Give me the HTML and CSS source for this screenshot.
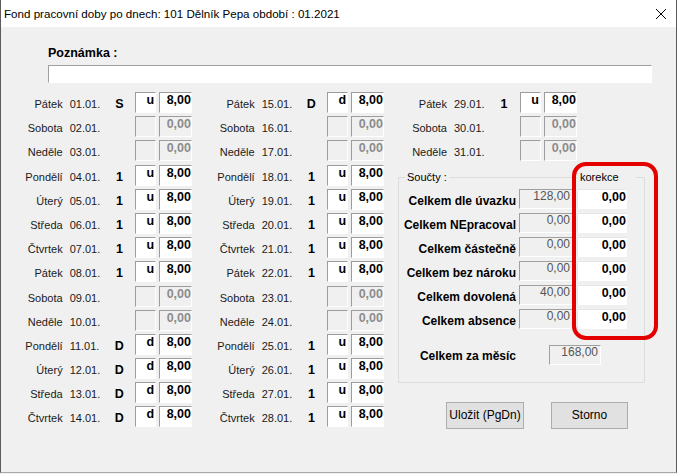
FILE: index.html
```html
<!DOCTYPE html>
<html lang="cs">
<head>
<meta charset="utf-8">
<title>Fond pracovní doby</title>
<link rel="stylesheet" href="styles.css">
</head>
<body>
<div class="window">
  <div class="titlebar">
    <span class="title">Fond pracovní doby po dnech: 101 Dělník Pepa období : 01.2021</span>
    <svg class="close" width="10" height="10" viewBox="0 0 10 10"><path d="M0 0 L10 10 M10 0 L0 10" stroke="#000" stroke-width="1" fill="none"/></svg>
  </div>
  <div class="content">
    <div class="note">
      <div class="note-label">Poznámka :</div>
      <div class="note-input"></div>
    </div>
    <div class="days">
      <div class="col col-first">
        <div class="row"><span class="lbl">Pátek</span><span class="date">01.01.</span><span class="code">S</span><span class="box">u</span><span class="val">8,00</span></div>
        <div class="row"><span class="lbl">Sobota</span><span class="date">02.01.</span><span class="code"></span><span class="box off"></span><span class="val off">0,00</span></div>
        <div class="row"><span class="lbl">Neděle</span><span class="date">03.01.</span><span class="code"></span><span class="box off"></span><span class="val off">0,00</span></div>
        <div class="row"><span class="lbl">Pondělí</span><span class="date">04.01.</span><span class="code">1</span><span class="box">u</span><span class="val">8,00</span></div>
        <div class="row"><span class="lbl">Úterý</span><span class="date">05.01.</span><span class="code">1</span><span class="box">u</span><span class="val">8,00</span></div>
        <div class="row"><span class="lbl">Středa</span><span class="date">06.01.</span><span class="code">1</span><span class="box">u</span><span class="val">8,00</span></div>
        <div class="row"><span class="lbl">Čtvrtek</span><span class="date">07.01.</span><span class="code">1</span><span class="box">u</span><span class="val">8,00</span></div>
        <div class="row"><span class="lbl">Pátek</span><span class="date">08.01.</span><span class="code">1</span><span class="box">u</span><span class="val">8,00</span></div>
        <div class="row"><span class="lbl">Sobota</span><span class="date">09.01.</span><span class="code"></span><span class="box off"></span><span class="val off">0,00</span></div>
        <div class="row"><span class="lbl">Neděle</span><span class="date">10.01.</span><span class="code"></span><span class="box off"></span><span class="val off">0,00</span></div>
        <div class="row"><span class="lbl">Pondělí</span><span class="date">11.01.</span><span class="code">D</span><span class="box">d</span><span class="val">8,00</span></div>
        <div class="row"><span class="lbl">Úterý</span><span class="date">12.01.</span><span class="code">D</span><span class="box">d</span><span class="val">8,00</span></div>
        <div class="row"><span class="lbl">Středa</span><span class="date">13.01.</span><span class="code">D</span><span class="box">d</span><span class="val">8,00</span></div>
        <div class="row"><span class="lbl">Čtvrtek</span><span class="date">14.01.</span><span class="code">D</span><span class="box">d</span><span class="val">8,00</span></div>
      </div>
      <div class="col">
        <div class="row"><span class="lbl">Pátek</span><span class="date">15.01.</span><span class="code">D</span><span class="box">d</span><span class="val">8,00</span></div>
        <div class="row"><span class="lbl">Sobota</span><span class="date">16.01.</span><span class="code"></span><span class="box off"></span><span class="val off">0,00</span></div>
        <div class="row"><span class="lbl">Neděle</span><span class="date">17.01.</span><span class="code"></span><span class="box off"></span><span class="val off">0,00</span></div>
        <div class="row"><span class="lbl">Pondělí</span><span class="date">18.01.</span><span class="code">1</span><span class="box">u</span><span class="val">8,00</span></div>
        <div class="row"><span class="lbl">Úterý</span><span class="date">19.01.</span><span class="code">1</span><span class="box">u</span><span class="val">8,00</span></div>
        <div class="row"><span class="lbl">Středa</span><span class="date">20.01.</span><span class="code">1</span><span class="box">u</span><span class="val">8,00</span></div>
        <div class="row"><span class="lbl">Čtvrtek</span><span class="date">21.01.</span><span class="code">1</span><span class="box">u</span><span class="val">8,00</span></div>
        <div class="row"><span class="lbl">Pátek</span><span class="date">22.01.</span><span class="code">1</span><span class="box">u</span><span class="val">8,00</span></div>
        <div class="row"><span class="lbl">Sobota</span><span class="date">23.01.</span><span class="code"></span><span class="box off"></span><span class="val off">0,00</span></div>
        <div class="row"><span class="lbl">Neděle</span><span class="date">24.01.</span><span class="code"></span><span class="box off"></span><span class="val off">0,00</span></div>
        <div class="row"><span class="lbl">Pondělí</span><span class="date">25.01.</span><span class="code">1</span><span class="box">u</span><span class="val">8,00</span></div>
        <div class="row"><span class="lbl">Úterý</span><span class="date">26.01.</span><span class="code">1</span><span class="box">u</span><span class="val">8,00</span></div>
        <div class="row"><span class="lbl">Středa</span><span class="date">27.01.</span><span class="code">1</span><span class="box">u</span><span class="val">8,00</span></div>
        <div class="row"><span class="lbl">Čtvrtek</span><span class="date">28.01.</span><span class="code">1</span><span class="box">u</span><span class="val">8,00</span></div>
      </div>
      <div class="col col-last">
        <div class="row"><span class="lbl">Pátek</span><span class="date">29.01.</span><span class="code">1</span><span class="box">u</span><span class="val">8,00</span></div>
        <div class="row"><span class="lbl">Sobota</span><span class="date">30.01.</span><span class="code"></span><span class="box off"></span><span class="val off">0,00</span></div>
        <div class="row"><span class="lbl">Neděle</span><span class="date">31.01.</span><span class="code"></span><span class="box off"></span><span class="val off">0,00</span></div>

        <div class="group">
          <div class="ghead"><span class="gtitle">Součty :</span><span class="gkor">korekce</span></div>
          <div class="srows">
            <div class="srow"><span class="slbl">Celkem dle úvazku</span><span class="sval">128,00</span><span class="skor">0,00</span></div>
            <div class="srow"><span class="slbl">Celkem NEpracoval</span><span class="sval">0,00</span><span class="skor">0,00</span></div>
            <div class="srow"><span class="slbl">Celkem částečně</span><span class="sval">0,00</span><span class="skor">0,00</span></div>
            <div class="srow"><span class="slbl">Celkem bez nároku</span><span class="sval">0,00</span><span class="skor">0,00</span></div>
            <div class="srow"><span class="slbl">Celkem dovolená</span><span class="sval">40,00</span><span class="skor">0,00</span></div>
            <div class="srow"><span class="slbl">Celkem absence</span><span class="sval">0,00</span><span class="skor">0,00</span></div>
          </div>
          <div class="mrow"><span class="slbl">Celkem za měsíc</span><span class="sval mval">168,00</span></div>
        </div>

        <div class="btns">
          <button class="btn btn-save" type="button">Uložit (PgDn)</button>
          <button class="btn btn-cancel" type="button">Storno</button>
        </div>
      </div>
    </div>
  </div>
  <div class="highlight"></div>
</div>
</body>
</html>
```
FILE: styles.css
```css
html, body {
  margin: 0;
  padding: 0;
  background: #f0f0f0;
}

body {
  font-family: "Liberation Sans", Arial, sans-serif;
  color: #000;
}

.window {
  position: relative;
  width: 677px;
  height: 473px;
  box-sizing: border-box;
  border-left: 1px solid #5c5c5c;
  border-right: 1px solid #5c5c5c;
  border-bottom: 1px solid #a8a8a8;
  background: #f0f0f0;
  overflow: hidden;
}

.titlebar {
  height: 27px;
  background: #fff;
  display: flex;
  align-items: center;
  justify-content: space-between;
  padding: 0 10px 0 3px;
}

.title {
  font-size: 11.6px;
  white-space: nowrap;
}

.close {
  display: block;
}

.content {
  padding-top: 18px;
}

.note {
  padding: 0 24px 0 47px;
}

.note-label {
  font-weight: bold;
  font-size: 12.5px;
  line-height: 16px;
}

.note-input {
  margin-top: 4px;
  height: 18px;
  box-sizing: border-box;
  background: #fff;
  border-top: 1px solid #a0a0a0;
  border-left: 1px solid #a0a0a0;
  border-right: 1px solid #fff;
  border-bottom: 1px solid #fff;
}

.days {
  display: grid;
  grid-template-columns: 191px 192px 1fr;
  margin-top: 9px;
}

.col {
  display: flex;
  flex-direction: column;
}

.row {
  height: 24.2px;
  display: flex;
  align-items: flex-start;
  flex: none;
}

.lbl {
  width: 63px;
  text-align: right;
  font-size: 11px;
  line-height: 21px;
  padding-top: 2px;
  white-space: nowrap;
  color: #1a1a1a;
}

.col-first .lbl {
  width: 62px;
}

.date {
  margin-left: 7px;
  width: 40px;
  font-size: 11px;
  line-height: 21px;
  padding-top: 2px;
  color: #1a1a1a;
}

.code {
  width: 20px;
  text-align: center;
  font-weight: bold;
  font-size: 12.5px;
  line-height: 21px;
  padding-top: 2px;
}

.box,
.val {
  height: 21px;
  box-sizing: border-box;
  background: #fff;
  border-top: 1px solid #9c9c9c;
  border-left: 1px solid #9c9c9c;
  border-right: 1px solid #fff;
  border-bottom: 1px solid #fff;
  text-align: right;
  font-weight: bold;
  font-size: 12.5px;
  line-height: 15px;
  padding-right: 1px;
  overflow: hidden;
  white-space: nowrap;
}

.box {
  margin-left: 6px;
  width: 21px;
}

.val {
  margin-left: 3px;
  width: 33px;
  padding-right: 0;
}

.off {
  background: #f0f0f0;
  color: #8c8c8c;
}

.group {
  margin: 12.4px 0 0 14px;
  width: 247px;
  box-sizing: border-box;
  border: 1px solid #dcdcdc;
  padding-bottom: 17px;
}

.ghead {
  display: flex;
  height: 16px;
  margin-top: -9px;
  font-size: 11px;
  line-height: 16px;
}

.gtitle {
  margin-left: 6px;
  padding: 0 2px;
  background: #f0f0f0;
}

.gkor {
  margin-left: auto;
  margin-right: 8px;
  width: 58px;
  box-sizing: border-box;
  padding-left: 2px;
  background: #f0f0f0;
}

.srows {
  margin-top: 4px;
}

.srow {
  height: 24px;
  display: flex;
  align-items: flex-start;
}

.slbl {
  width: 117px;
  text-align: right;
  font-weight: bold;
  font-size: 12px;
  line-height: 20px;
  padding-top: 2px;
  white-space: nowrap;
}

.sval {
  margin-left: 3px;
  width: 54px;
  height: 20px;
  box-sizing: border-box;
  background: #f0f0f0;
  border-top: 1px solid #a0a0a0;
  border-left: 1px solid #a0a0a0;
  border-right: 1px solid #fff;
  border-bottom: 1px solid #fff;
  color: #555;
  font-size: 12px;
  line-height: 13px;
  text-align: right;
  padding-right: 2px;
  overflow: hidden;
  white-space: nowrap;
}

.skor {
  margin-left: 4px;
  width: 50px;
  height: 20px;
  box-sizing: border-box;
  background: #fff;
  border-top: 1px solid #e6e6e6;
  border-left: 1px solid #e6e6e6;
  font-weight: bold;
  font-size: 12.5px;
  line-height: 15px;
  text-align: right;
  padding-right: 1px;
}

.mrow {
  margin-top: 12px;
  display: flex;
  align-items: flex-start;
  height: 20px;
}

.mrow .slbl {
  padding-top: 1px;
}

.mval {
  margin-left: 33px;
  width: 52px;
}

.btns {
  display: flex;
  gap: 27px;
  margin: 19px 0 0 62px;
}

.btn {
  height: 27px;
  box-sizing: border-box;
  background: #e1e1e1;
  border: 1px solid #adadad;
  border-radius: 0;
  padding: 0;
  font-family: "Liberation Sans", Arial, sans-serif;
  font-size: 12px;
  color: #000;
  text-align: center;
}

.btn-save {
  width: 78px;
}

.btn-cancel {
  width: 77px;
}

.highlight {
  position: absolute;
  left: 571px;
  top: 162px;
  width: 86px;
  height: 178px;
  box-sizing: border-box;
  border: 4px solid #e50000;
  border-radius: 14px;
  pointer-events: none;
}
```
